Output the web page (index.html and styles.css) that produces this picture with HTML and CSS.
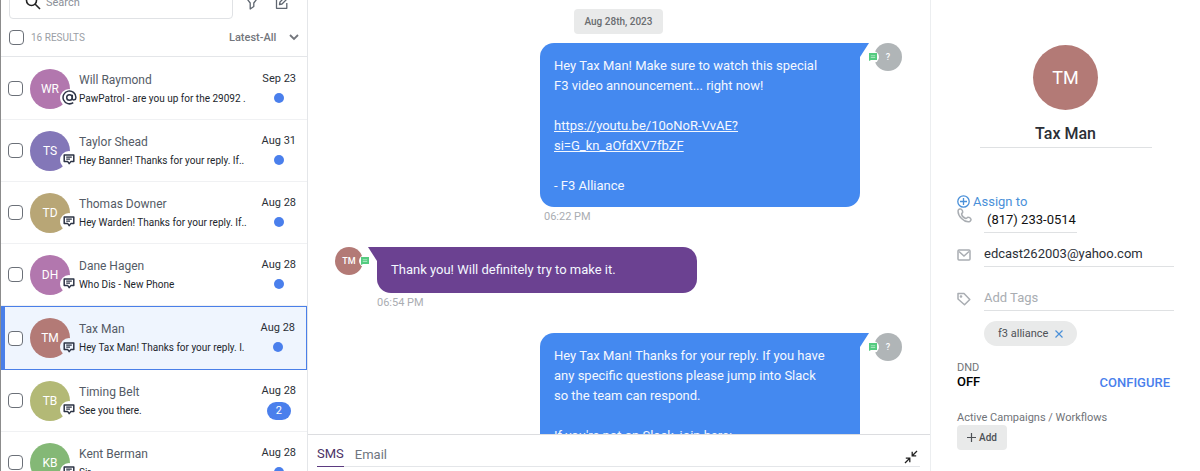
FILE: index.html
```html
<!DOCTYPE html>
<html lang="en">
<head>
    <meta charset="UTF-8">
    <meta name="viewport" content="width=device-width, initial-scale=1.0">
    <title>Conversations</title>
    <link rel="stylesheet" href="styles.css">
</head>
<body>
    <!-- Shared icons -->
    <svg class="sprite" aria-hidden="true">
        <symbol id="icon-sms" viewBox="0 0 12 11">
            <path d="M1.2 1h9.600v6.400H8L6.200 9.600 4.600 7.400H1.200z" fill="none" stroke="#2d3446" stroke-width="1.500" stroke-linejoin="round"/>
            <path d="M3.200 3.200h5.600M3.200 5.200h3.800" fill="none" stroke="#2d3446" stroke-width="1.200"/>
        </symbol>
        <symbol id="icon-chat" viewBox="0 0 8 8">
            <path d="M0 0h8v7H2L0 8z" fill="#55cb80"/>
            <path d="M1.800 2.200h4.400v1H1.800zM1.800 4h4.400v1H1.800z" fill="#a5e6bd"/>
        </symbol>
    </svg>

    <div class="app">
        <aside class="sidebar">
            <div class="toolbar">
                <label class="search">
                    <svg width="16" height="16" viewBox="0 0 16 16" fill="none" stroke="#222" stroke-width="1.6"><circle cx="6.5" cy="6.5" r="5"/><path d="M10 10l5 5"/></svg>
                    <input type="search" placeholder="Search" aria-label="Search">
                </label>
                <button class="icon-btn" type="button" aria-label="Filter">
                    <svg width="14" height="16" viewBox="0 0 14 16" fill="none" stroke="#5f6670" stroke-width="1.3" stroke-linejoin="round"><path d="M1 1h12v2.500L8.800 9v3.500L5.200 15V9L1 3.500z"/></svg>
                </button>
                <button class="icon-btn" type="button" aria-label="New message">
                    <svg width="14" height="14" viewBox="0 0 14 14" fill="none" stroke="#5f6670" stroke-width="1.3" stroke-linejoin="round"><path d="M6 2.500H1.500v10.800h10.300V8M11 1l2 2-6 6-2.500.5.5-2.500z"/></svg>
                </button>
            </div>
            <div class="results">
                <input type="checkbox" id="selectAll">
                <label for="selectAll">16 RESULTS</label>
                <span class="sort">
                    <select aria-label="Sort">
                        <option>Latest-All</option>
                    </select>
                    <svg width="10" height="7" viewBox="0 0 10 7" fill="none" stroke="#73767c" stroke-width="1.8"><path d="M1 1l4 4 4-4"/></svg>
                </span>
            </div>
            <ul class="threads">
                <li class="thread">
                    <input type="checkbox" aria-label="Will Raymond">
                    <span class="avatar pink">WR<span class="badge"><svg width="15" height="15" viewBox="0 0 14 14" fill="none" stroke="#2d3446" stroke-width="1.4"><circle cx="7" cy="7" r="2.600"/><path d="M9.600 4.400v3.500c0 2 3.400 1.800 3.400-1A6 6 0 1 0 10.500 11.800"/></svg></span></span>
                    <div class="summary"><h3>Will Raymond</h3><p>PawPatrol - are you up for the 29092 .</p></div>
                    <div class="meta"><time>Sep 23</time><i class="dot"></i></div>
                </li>
                <li class="thread">
                    <input type="checkbox" aria-label="Taylor Shead">
                    <span class="avatar violet">TS<span class="badge"><svg width="12" height="11"><use href="#icon-sms"/></svg></span></span>
                    <div class="summary"><h3>Taylor Shead</h3><p>Hey Banner! Thanks for your reply. If..</p></div>
                    <div class="meta"><time>Aug 31</time><i class="dot"></i></div>
                </li>
                <li class="thread">
                    <input type="checkbox" aria-label="Thomas Downer">
                    <span class="avatar sand">TD<span class="badge"><svg width="12" height="11"><use href="#icon-sms"/></svg></span></span>
                    <div class="summary"><h3>Thomas Downer</h3><p>Hey Warden! Thanks for your reply. If..</p></div>
                    <div class="meta"><time>Aug 28</time><i class="dot"></i></div>
                </li>
                <li class="thread">
                    <input type="checkbox" aria-label="Dane Hagen">
                    <span class="avatar pink">DH<span class="badge"><svg width="12" height="11"><use href="#icon-sms"/></svg></span></span>
                    <div class="summary"><h3>Dane Hagen</h3><p>Who Dis - New Phone</p></div>
                    <div class="meta"><time>Aug 28</time><i class="dot"></i></div>
                </li>
                <li class="thread active">
                    <input type="checkbox" aria-label="Tax Man">
                    <span class="avatar rose">TM<span class="badge"><svg width="12" height="11"><use href="#icon-sms"/></svg></span></span>
                    <div class="summary"><h3>Tax Man</h3><p>Hey Tax Man! Thanks for your reply. I.</p></div>
                    <div class="meta"><time>Aug 28</time><i class="dot"></i></div>
                </li>
                <li class="thread">
                    <input type="checkbox" aria-label="Timing Belt">
                    <span class="avatar olive">TB<span class="badge"><svg width="12" height="11"><use href="#icon-sms"/></svg></span></span>
                    <div class="summary"><h3>Timing Belt</h3><p>See you there.</p></div>
                    <div class="meta"><time>Aug 28</time><span class="count">2</span></div>
                </li>
                <li class="thread">
                    <input type="checkbox" aria-label="Kent Berman">
                    <span class="avatar green">KB<span class="badge"><svg width="12" height="11"><use href="#icon-sms"/></svg></span></span>
                    <div class="summary"><h3>Kent Berman</h3><p>Sir.</p></div>
                    <div class="meta"><time>Aug 28</time><i class="dot"></i></div>
                </li>
            </ul>
        </aside>

        <main class="chat">
            <div class="messages">
                <div class="day">Aug 28th, 2023</div>
                <div class="message out">
                    <div class="body">
                        <div class="bubble">
                            <p>Hey Tax Man! Make sure to watch this special<br>F3 video announcement... right now!</p>
                            <p><a href="#">https://youtu.be/10oNoR-VvAE?<br>si=G_kn_aOfdXV7fbZF</a></p>
                            <p>- F3 Alliance</p>
                        </div>
                        <time>06:22 PM</time>
                    </div>
                    <span class="avatar small grey">?<span class="badge"><svg width="8" height="8"><use href="#icon-chat"/></svg></span></span>
                </div>
                <div class="message in">
                    <span class="avatar small rose">TM<span class="badge"><svg width="8" height="8"><use href="#icon-chat"/></svg></span></span>
                    <div class="body">
                        <div class="bubble"><p>Thank you! Will definitely try to make it.</p></div>
                        <time>06:54 PM</time>
                    </div>
                </div>
                <div class="message out">
                    <div class="body">
                        <div class="bubble">
                            <p>Hey Tax Man! Thanks for your reply. If you have<br>any specific questions please jump into Slack<br>so the team can respond.</p>
                            <p>If you're not on Slack, join here:</p>
                        </div>
                    </div>
                    <span class="avatar small grey">?<span class="badge"><svg width="8" height="8"><use href="#icon-chat"/></svg></span></span>
                </div>
            </div>
            <div class="composer">
                <div class="tabs">
                    <button class="tab current" type="button">SMS</button>
                    <button class="tab" type="button">Email</button>
                    <button class="collapse" type="button" aria-label="Collapse">
                        <svg width="14" height="14" viewBox="0 0 14 14" fill="none" stroke="#222" stroke-width="1.3"><path d="M13 1L8.500 5.500M8.200 1.800v4h4M1 13l4.500-4.500M1.800 8.200h4v4"/></svg>
                    </button>
                </div>
            </div>
        </main>

        <aside class="contact">
            <div class="profile">
                <span class="avatar large rose">TM</span>
                <input type="text" value="Tax Man" aria-label="Name">
            </div>
            <button class="assign" type="button">
                <svg width="13" height="13" viewBox="0 0 13 13" fill="none" stroke="#4a90d9" stroke-width="1.3"><circle cx="6.500" cy="6.500" r="5.700"/><path d="M6.500 3v7M3 6.500h7"/></svg>
                Assign to
            </button>
            <div class="field phone">
                <svg width="15" height="15" viewBox="0 0 15 15" fill="none" stroke="#a9adb2" stroke-width="1.500" stroke-linejoin="round"><path d="M1.200 2.200C2 1 3.500.6 4.300 1.300c.8.700 1.500 2 1.400 2.900-.1.800-1.300 1.200-1.100 2 .4 1.700 2.500 3.800 4.200 4.300.8.200 1.300-1.200 2.200-1.200 1 0 2.500.9 2.900 1.700.4.900-.5 2.400-1.800 2.800C7.500 14.500.2 8 1.200 2.200z"/></svg>
                <input type="tel" value="(817) 233-0514" aria-label="Phone">
            </div>
            <div class="field email">
                <svg width="14" height="12" viewBox="0 0 14 12" fill="none" stroke="#a9adb2" stroke-width="1.500"><rect x="1" y="1" width="12" height="10" rx="1"/><path d="M2 2.500L7 7l5-4.500"/></svg>
                <input type="email" value="edcast262003@yahoo.com" aria-label="Email">
            </div>
            <div class="field tags">
                <svg width="14" height="14" viewBox="0 0 14 14" fill="none" stroke="#a9adb2" stroke-width="1.500" stroke-linejoin="round"><path d="M1 1.500h6L12.800 7.500 7.500 12.800 1 7z"/><circle cx="4" cy="4.500" r=".6"/></svg>
                <input type="text" placeholder="Add Tags" aria-label="Add Tags">
            </div>
            <span class="tag">f3 alliance
                <button type="button" aria-label="Remove tag"><svg width="8" height="8" viewBox="0 0 8 8" stroke="#4a90d9" stroke-width="1.200"><path d="M.5.5l7 7M7.500.5l-7 7"/></svg></button>
            </span>
            <div class="dnd">
                <div>
                    <p class="caption">DND</p>
                    <strong>OFF</strong>
                </div>
                <button type="button">CONFIGURE</button>
            </div>
            <p class="caption">Active Campaigns / Workflows</p>
            <button class="add" type="button">
                <svg width="9" height="9" viewBox="0 0 9 9" stroke="#4d5156" stroke-width="1.200"><path d="M4.500 0v9M0 4.500h9"/></svg>
                Add
            </button>
        </aside>
    </div>
</body>
</html>
```
FILE: styles.css
```css
* {
    box-sizing: border-box;
}
body {
    margin: 0;
    font-family: Roboto, "Liberation Sans", sans-serif;
    font-size: 13px;
    color: #2b2f36;
    background: #fff;
}
h3, p, ul {
    margin: 0;
    padding: 0;
    font-weight: 400;
}
button, input, select {
    font: inherit;
    color: inherit;
    border: 0;
    padding: 0;
    margin: 0;
    background: none;
    outline: none;
}
svg {
    display: block;
    flex: none;
}
.sprite {
    position: absolute;
    width: 0;
    height: 0;
}
.app {
    display: grid;
    grid-template-columns: 308px 1fr 270px;
    height: 100vh;
    overflow: hidden;
}

/* Thread list */
.sidebar {
    border-left: 1px solid #8c8c8c;
    border-right: 1px solid #e4e6e9;
    overflow: hidden;
}
.toolbar {
    display: flex;
    align-items: center;
    gap: 16px;
    height: 34px;
    margin-top: -15px;
    padding: 0 18px 0 8px;
}
.search {
    display: flex;
    flex: 1;
    align-items: center;
    gap: 5px;
    height: 34px;
    margin-right: -4px;
    padding: 0 15px;
    border: 1px solid #e0e2e5;
    border-radius: 4px;
}
.search input {
    width: 100%;
    font-size: 11px;
}
.search input::placeholder {
    color: #8b9098;
}
input[type="checkbox"] {
    appearance: none;
    flex: none;
    width: 15px;
    height: 15px;
    border: 1px solid #6b7078;
    border-radius: 4px;
    background: #fff;
}
.results {
    display: flex;
    align-items: center;
    height: 38px;
    padding: 0 8px;
    gap: 7px;
    border-bottom: 1px solid #e4e6e9;
    font-size: 10px;
    color: #9a9ea5;
}
.sort {
    display: flex;
    align-items: center;
    gap: 12px;
    margin-left: auto;
    font-size: 11px;
    font-weight: 500;
    color: #73767c;
}
.sort select {
    appearance: none;
}
.threads {
    list-style: none;
    padding-top: 1px;
}
.thread {
    display: flex;
    align-items: center;
    height: 62px;
    padding: 0 11px 0 7px;
    border-bottom: 1px solid #f0f1f3;
}
.thread.active {
    height: 64px;
    padding: 0 11px 0 3px;
    border: 1px solid #4a7fe8;
    border-left-width: 4px;
    background: #eff5fe;
}
.avatar {
    position: relative;
    display: flex;
    flex: none;
    align-items: center;
    justify-content: center;
    width: 40px;
    height: 40px;
    border-radius: 50%;
    font-size: 12px;
    color: #fff;
}
.thread .avatar {
    margin: 0 9px 0 7px;
}
.pink { background: #b277ae; }
.violet { background: #8377b8; }
.sand { background: #b8a676; }
.rose { background: #b37a76; }
.olive { background: #b3b976; }
.green { background: #84b876; }
.grey { background: #b0b5b7; }
.badge {
    position: absolute;
    right: -8px;
    bottom: 2px;
    display: flex;
    align-items: center;
    justify-content: center;
    width: 18px;
    height: 18px;
    border-radius: 50%;
    background: #fff;
}
.active .badge {
    background: #eff5fe;
}
.summary {
    flex: 1;
    min-width: 0;
    white-space: nowrap;
}
.summary h3 {
    font-size: 12px;
    line-height: 20px;
    color: #545b66;
}
.summary p {
    font-size: 10px;
    line-height: 18px;
    color: #22262c;
}
.meta {
    display: flex;
    flex-direction: column;
    align-items: center;
    height: 38px;
    font-size: 11px;
    line-height: 18px;
}
.dot {
    width: 10px;
    height: 10px;
    margin-top: 5px;
    border-radius: 50%;
    background: #4a7fec;
}
.count {
    width: 24px;
    margin-top: 2px;
    border-radius: 9px;
    text-align: center;
    color: #fff;
    background: #4a7fec;
}

/* Conversation */
.chat {
    display: flex;
    flex-direction: column;
    min-width: 0;
    height: 100vh;
}
.messages {
    flex: 1;
    display: flex;
    flex-direction: column;
    gap: 20px;
    min-height: 0;
    overflow: hidden;
    padding: 9px 28px 0 27px;
}
.messages > * {
    flex: none;
}
.day {
    align-self: center;
    margin-bottom: -11px;
    padding: 0 10px;
    border-radius: 4px;
    font-size: 10px;
    font-weight: 500;
    line-height: 25px;
    color: #6a6d70;
    background: #e9eaea;
}
.message {
    display: flex;
    gap: 14px;
}
.message.out {
    justify-content: flex-end;
}
.body {
    width: 320px;
}
.bubble {
    position: relative;
    display: flex;
    flex-direction: column;
    gap: 20px;
    padding: 13px 14px;
    border-radius: 14px;
    line-height: 20px;
    color: #f4f8ff;
    background: #4489f0;
}
.bubble a {
    color: inherit;
}
.out .bubble {
    padding-bottom: 11px;
    border-top-right-radius: 0;
}
.in .bubble {
    border-top-left-radius: 0;
    background: #6b4191;
}
/* Bubble tail */
.bubble::after {
    content: "";
    position: absolute;
    top: 0;
    left: 100%;
    width: 9px;
    height: 14px;
    background: inherit;
    clip-path: polygon(0 0, 100% 0, 0 100%);
}
.in .bubble::after {
    left: auto;
    right: 100%;
    clip-path: polygon(0 0, 100% 0, 100% 100%);
}
.body time {
    display: block;
    font-size: 11px;
    line-height: 20px;
    color: #aaadb2;
}
.out time {
    padding-left: 4px;
}
.avatar.small {
    width: 28px;
    height: 28px;
    font-size: 9px;
    font-weight: 500;
}
.small .badge {
    right: -8px;
    bottom: 8px;
    width: 12px;
    height: 12px;
}
.out .small .badge {
    right: auto;
    left: -7px;
}
.composer {
    height: 37px;
    padding: 6px 10px 0 9px;
    border-top: 1px solid #dcdde0;
}
.tabs {
    display: flex;
    gap: 11px;
    height: 26px;
    border-bottom: 1px solid #e4e6e9;
}
.tab {
    height: 26px;
    font-size: 13px;
    color: #6f7680;
}
.tab.current {
    border-bottom: 1px solid #5b3a80;
    color: #4b3266;
}
.collapse {
    align-self: flex-end;
    margin: 0 2px 2px auto;
}

/* Contact details */
.contact {
    padding: 45px 26px 0 26px;
    border-left: 1px solid #eceef0;
}
.profile {
    display: flex;
    flex-direction: column;
    align-items: center;
    margin-bottom: 46px;
}
.avatar.large {
    width: 65px;
    height: 65px;
    font-size: 18px;
}
.profile input {
    width: 172px;
    height: 28px;
    margin-top: 10px;
    border-bottom: 1px solid #dfe1e3;
    text-align: center;
    font-size: 16px;
    font-weight: 500;
}
.assign {
    display: flex;
    align-items: center;
    gap: 3px;
    height: 14px;
    color: #4a90d9;
}
.field {
    display: grid;
    grid-template-columns: 27px 1fr;
    align-items: center;
}
.field input {
    height: 25px;
    min-width: 0;
    padding-bottom: 2px;
    border-bottom: 1px solid #dfe1e3;
}
.field input::placeholder {
    color: #a9adb2;
}
.field.phone {
    grid-template-columns: 27px 93px;
}
.phone svg {
    align-self: start;
}
.phone input {
    padding-left: 3px;
    color: #111;
}
.email {
    margin-top: 9px;
}
.tags {
    margin-top: 19px;
}
.tag {
    display: inline-flex;
    align-items: center;
    gap: 7px;
    height: 25px;
    margin: 10px 0 0 27px;
    padding: 0 14px;
    border-radius: 13px;
    font-size: 11px;
    color: #4d5156;
    background: #e9eaea;
}
.dnd {
    display: flex;
    align-items: flex-end;
    justify-content: space-between;
    margin: 15px 4px 22px 0;
}
.dnd strong {
    display: block;
    font-weight: 500;
    line-height: 14px;
    color: #000;
}
.dnd button {
    line-height: 12px;
    font-weight: 500;
    color: #4a7fec;
}
.caption {
    font-size: 11px;
    line-height: 14px;
    color: #6f7378;
}
.add {
    display: flex;
    align-items: center;
    gap: 3px;
    height: 25px;
    padding: 0 10px;
    border-radius: 4px;
    font-size: 10px;
    font-weight: 500;
    color: #4d5156;
    background: #e9eaea;
}
```
